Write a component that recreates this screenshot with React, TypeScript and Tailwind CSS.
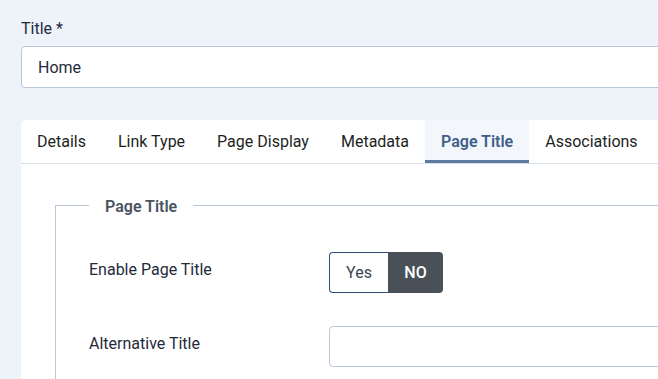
import { useState } from 'react';

const tabs = ['Details', 'Link Type', 'Page Display', 'Metadata', 'Page Title', 'Associations'];

export default function App() {
    const [active, setActive] = useState('Page Title');
    const [enabled, setEnabled] = useState(false);
    const [title, setTitle] = useState('Home');
    const [altTitle, setAltTitle] = useState('');

    return (
        <div className="w-[658px] h-[379px] overflow-hidden bg-[#eef3fa] font-['Roboto',sans-serif] text-[16px]">
            <div className="w-[760px] pl-[21px] pt-[18px]">
                <label className="block leading-[22px] text-[#1f2a3c] mb-[6px]">Title *</label>
                <input
                    type="text"
                    value={title}
                    onChange={(e) => setTitle(e.target.value)}
                    className="block w-full h-[42px] bg-white border border-[#b9c7db] rounded-[4px] px-[16px] text-[#1f2a3c] focus:outline-none"
                />

                <div className="mt-[32px] bg-white rounded-tl-[6px]">
                    <div className="flex h-[44px] border-b border-[#d8e0ea]">
                        {tabs.map((t) => (
                            <button
                                key={t}
                                onClick={() => setActive(t)}
                                className={
                                    t === active
                                        ? 'px-[16px] h-full bg-[#f3f6fa] border-b-[3px] border-[#5d7ba1] pt-[3px] font-semibold text-[#3f5f8b]'
                                        : 'px-[16px] h-full text-[#1d1f22]'
                                }
                            >
                                {t}
                            </button>
                        ))}
                    </div>

                    <div className="pl-[34px] pt-[30px] pb-[20px]">
                        <fieldset className="border border-[#b9c7db] pl-[33px] pb-[20px]">
                            <legend className="px-[16px] leading-[22px] font-semibold text-[#4a5360]">
                                <span className="relative top-[2px]">Page Title</span>
                            </legend>

                            <div className="flex items-center mt-[36px]">
                                <div className="w-[240px] text-[#1f2a3c] -mt-[6px]">Enable Page Title</div>
                                <div className="flex h-[41px]">
                                    <button
                                        onClick={() => setEnabled(true)}
                                        className={
                                            enabled
                                                ? 'w-[59px] rounded-l-[4px] bg-[#2a7a3c] text-white'
                                                : 'w-[59px] rounded-l-[4px] border border-r-0 border-[#2d4f7f] text-[#3c4450]'
                                        }
                                    >
                                        Yes
                                    </button>
                                    <button
                                        onClick={() => setEnabled(false)}
                                        className={
                                            enabled
                                                ? 'w-[55px] rounded-r-[4px] border border-l-0 border-[#2d4f7f] text-[#3c4450]'
                                                : 'w-[55px] rounded-r-[4px] bg-[#495057] text-white font-medium'
                                        }
                                    >
                                        NO
                                    </button>
                                </div>
                            </div>

                            <div className="flex items-center mt-[33px]">
                                <div className="w-[240px] text-[#1f2a3c] -mt-[6px]">Alternative Title</div>
                                <input
                                    type="text"
                                    value={altTitle}
                                    onChange={(e) => setAltTitle(e.target.value)}
                                    className="flex-1 h-[41px] bg-white border border-[#b9c7db] rounded-[4px] px-[12px] focus:outline-none"
                                />
                            </div>
                        </fieldset>
                    </div>
                </div>
            </div>
        </div>
    );
}
